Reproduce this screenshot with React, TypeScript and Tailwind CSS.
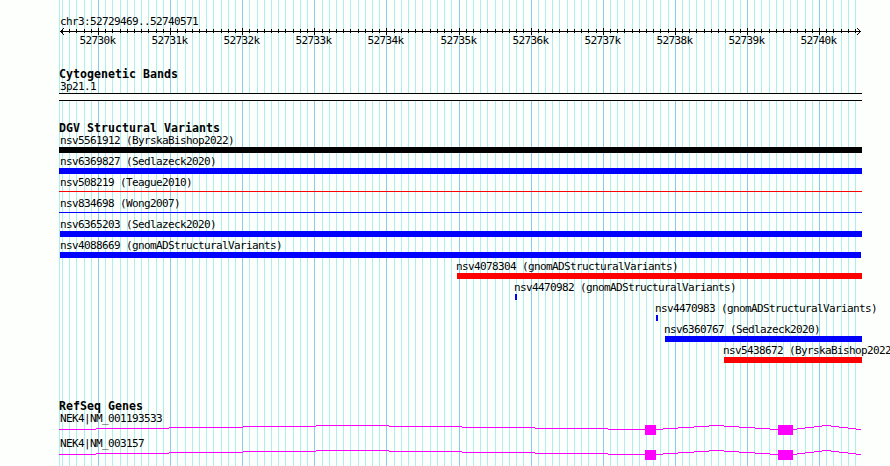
const SCALE = 7.21
const ORIGIN = 98.02

// one grid line per 100 bp, every tenth one is a full kb
const lines = Array.from({ length: 111 }, (_, i) => i - 5).map(k => ({
  x: Math.round(ORIGIN + k * SCALE),
  major: k % 10 === 0
}))

const kbLabels = Array.from({ length: 11 }, (_, i) => ({
  text: `${52730 + i}k`,
  x: Math.round(ORIGIN + i * 10 * SCALE) - 18.5
}))

type Variant = {
  name: string
  x: number
  barX: number
  end: number
  color: string
  thin?: boolean
}

const variants: Variant[] = [
  { name: 'nsv5561912 (ByrskaBishop2022)', x: 60, barX: 59, end: 862, color: 'bg-black' },
  { name: 'nsv6369827 (Sedlazeck2020)', x: 60, barX: 59, end: 862, color: 'bg-[#0000ff]' },
  { name: 'nsv508219 (Teague2010)', x: 60, barX: 59, end: 862, color: 'bg-[#ff0000]', thin: true },
  { name: 'nsv834698 (Wong2007)', x: 60, barX: 59, end: 862, color: 'bg-[#0000ff]', thin: true },
  { name: 'nsv6365203 (Sedlazeck2020)', x: 60, barX: 60, end: 862, color: 'bg-[#0000ff]' },
  { name: 'nsv4088669 (gnomADStructuralVariants)', x: 60, barX: 60, end: 861, color: 'bg-[#0000ff]' },
  { name: 'nsv4078304 (gnomADStructuralVariants)', x: 456, barX: 457, end: 862, color: 'bg-[#ff0000]' },
  { name: 'nsv4470982 (gnomADStructuralVariants)', x: 514, barX: 515, end: 517, color: 'bg-[#0000ff]' },
  { name: 'nsv4470983 (gnomADStructuralVariants)', x: 655, barX: 656, end: 658, color: 'bg-[#0000ff]' },
  { name: 'nsv6360767 (Sedlazeck2020)', x: 664, barX: 665, end: 862, color: 'bg-[#0000ff]' },
  { name: 'nsv5438672 (ByrskaBishop2022)', x: 723, barX: 724, end: 862, color: 'bg-[#ff0000]' }
]

// [x start, x end, rise above the base line]
const introns = [
  [59, 96, 0], [96, 169, 1], [169, 243, 2], [243, 316, 3], [316, 389, 4],
  [389, 462, 3], [462, 535, 2], [535, 608, 1], [608, 645, 0],
  [656, 663, 0], [663, 678, 1], [678, 694, 2], [694, 709, 3], [709, 724, 4],
  [724, 739, 3], [739, 755, 2], [755, 770, 1], [770, 778, 0],
  [793, 797, 0], [797, 805, 1], [805, 814, 2], [814, 822, 3], [822, 831, 4],
  [831, 839, 3], [839, 848, 2], [848, 856, 1], [856, 861, 0]
]

export default function App() {
  return (
    <div className="relative w-[890px] h-[466px] overflow-hidden bg-[#fcfffc] text-black">
      <Grid />
      <div className="relative flex flex-col">
        <div className="h-[15px]" />
        <Label text="chr3:52729469..52740571" x={60} />
        <Ruler />

        <div className="h-[15px]" />
        <Heading text="Cytogenetic Bands" />
        <Label text="3p21.1" x={60} />
        <div className="ml-[59px] w-[803px] h-2 border-y border-black bg-[#fcfffc]" />

        <div className="h-[21px]" />
        <Heading text="DGV Structural Variants" />
        {variants.map(v => <VariantRow key={v.name} variant={v} />)}

        <div className="h-[35px]" />
        <Heading text="RefSeq Genes" />
        <Gene name="NEK4|NM_001193533" />
        <Gene name="NEK4|NM_003157" />
      </div>
    </div>
  )
}

function Grid() {
  return (
    <svg className="absolute inset-0" width="890" height="466" shapeRendering="crispEdges">
      <rect x="59" y="0" width="1" height="466" fill="#afeeee" />
      {lines.map(l => (
        <rect key={l.x} x={l.x} y="0" width="1" height="466" fill={l.major ? '#87ceeb' : '#afeeee'} />
      ))}
    </svg>
  )
}

function Ruler() {
  return (
    <div className="relative h-[25px]">
      <svg className="block" width="890" height="9" shapeRendering="crispEdges">
        <rect x="60" y="3" width="801" height="1" />
        {[0, 1, 2, 3].map(i => (
          <g key={i}>
            <rect x={60 + i} y={3 - i} width="1" height="1" />
            <rect x={60 + i} y={3 + i} width="1" height="1" />
            <rect x={860 - i} y={3 - i} width="1" height="1" />
            <rect x={860 - i} y={3 + i} width="1" height="1" />
          </g>
        ))}
        {lines.map(l => (
          <rect key={l.x} x={l.x} y={l.major ? 0 : 1} width="1" height={l.major ? 7 : 4} />
        ))}
      </svg>
      {kbLabels.map(l => (
        <span
          key={l.text}
          className="absolute top-[6px] font-['DejaVu_Sans_Mono',monospace] text-[11px] leading-[13px] tracking-[-0.622px]"
          style={{ left: l.x }}
        >
          {l.text}
        </span>
      ))}
    </div>
  )
}

function Heading({ text }: { text: string }) {
  return (
    <h2 className="pl-[59px] h-[12px] whitespace-pre font-['DejaVu_Sans_Mono',monospace] font-bold text-[11.6px] leading-[13px] tracking-[0.016px]">
      {text}
    </h2>
  )
}

function Label({ text, x }: { text: string, x: number }) {
  return (
    <div
      className="h-[13px] whitespace-pre font-['DejaVu_Sans_Mono',monospace] text-[11px] leading-[13px] tracking-[-0.622px]"
      style={{ paddingLeft: x }}
    >
      {text}
    </div>
  )
}

function VariantRow({ variant: v }: { variant: Variant }) {
  return (
    <div className="h-[21px]">
      <Label text={v.name} x={v.x} />
      <div
        className={`${v.thin ? 'mt-[2px] h-px' : 'h-[6px]'} ${v.color}`}
        style={{ marginLeft: v.barX, width: v.end - v.barX }}
      />
    </div>
  )
}

function Gene({ name }: { name: string }) {
  return (
    <div className="h-[25px]">
      <Label text={name} x={60} />
      <svg className="block" width="890" height="10" shapeRendering="crispEdges" fill="#ff00ff">
        {introns.map(([a, b, rise]) => (
          <rect key={a} x={a} y={4 - rise} width={b - a} height="1" />
        ))}
        <rect x="645" y="0" width="11" height="10" />
        <rect x="778" y="0" width="15" height="10" />
      </svg>
    </div>
  )
}
